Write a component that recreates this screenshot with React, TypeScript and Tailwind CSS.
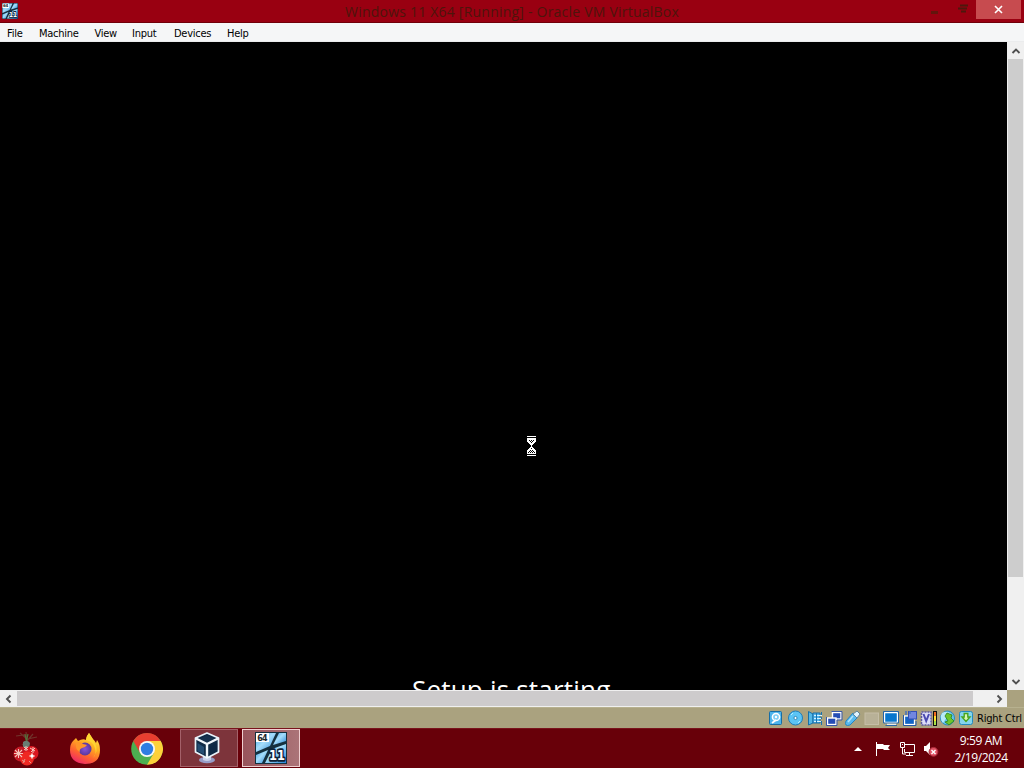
import React from "react";

const menuItems = [
  { label: "File", width: "w-[32px]" },
  { label: "Machine", width: "w-[55.5px]" },
  { label: "View", width: "w-[37.5px]" },
  { label: "Input", width: "w-[42px]" },
  { label: "Devices", width: "w-[53px]" },
  { label: "Help", width: "w-[40px]" },
];

function WindowsIcon({ size }: { size: number }) {
  return (
    <svg width={size} height={size} viewBox="0 0 32 32" className="shrink-0">
      <defs>
        <linearGradient id="pane" x1="0" y1="0" x2="1" y2="1">
          <stop offset="0" stopColor="#3f9fe3" />
          <stop offset="0.45" stopColor="#a5ddfb" />
          <stop offset="1" stopColor="#2584d6" />
        </linearGradient>
      </defs>
      <rect width="32" height="32" fill="#15303f" />
      <path d="M1 1H21L15 14 1 20Z" fill="url(#pane)" />
      <path d="M24 1H31V9L18 13Z" fill="url(#pane)" />
      <path d="M1 23 13 18 7 31H1Z" fill="url(#pane)" />
      <path d="M17 17 31 12V31H10Z" fill="url(#pane)" />
      <rect x="1" y="1" width="13" height="9" fill="#fff" />
      <text x="2.2" y="8.6" fontSize="8" fontWeight="700" fill="#20282d" textLength="10.5" fontFamily="DejaVu Sans">64</text>
      <text x="14" y="28" fontSize="14" fontWeight="700" fill="#fff" stroke="#0d2238" strokeWidth="3.4" strokeLinejoin="round" paintOrder="stroke" textLength="16" lengthAdjust="spacingAndGlyphs" fontFamily="DejaVu Sans">11</text>
    </svg>
  );
}

function Ornament() {
  return (
    <svg width="32" height="36" viewBox="0 0 32 36">
      <path d="M6 5 14 4 17 10 23 3M10 2 17 8 27 6M17 9 16 1M17 10 12 14" fill="none" stroke="#70332b" strokeWidth="1.2" />
      <path d="M15 3 17 13M18 3 16 12" stroke="#52733c" strokeWidth="1.2" />
      <path d="M13 11Q17 8 20 12L19 18H13Z" fill="#687d73" />
      <circle cx="11" cy="23" r="7.5" fill="#c41925" />
      <circle cx="21.5" cy="22" r="7" fill="#db1720" />
      <circle cx="17" cy="27.5" r="7" fill="#ef2822" />
      <path d="M5 19 12 26M5 26 12 19M8.5 18V27M4 22.5H13" stroke="#f6c6bb" strokeWidth="1.1" />
      <path d="M14 16 18 19M14 19 18 16M16 15V20M20 17 25 20M21 21 25 17M23 16V22M22 22V28M19 25H25" stroke="#f6c6bb" strokeWidth="1" />
      <path d="M12 29 15 31M15 28 13 32M19 30 21 32" stroke="#e59a8b" />
      <circle cx="22" cy="25" r="1.7" fill="#fff" />
    </svg>
  );
}

function Firefox() {
  return (
    <svg width="32" height="34" viewBox="0 0 32 34">
      <defs>
        <linearGradient id="fox" x1="0.8" y1="0" x2="0.3" y2="1">
          <stop offset="0" stopColor="#ffe84c" />
          <stop offset="0.4" stopColor="#ffad21" />
          <stop offset="0.7" stopColor="#ff632f" />
          <stop offset="1" stopColor="#ef276a" />
        </linearGradient>
        <radialGradient id="globe">
          <stop offset="0" stopColor="#8554dc" />
          <stop offset="1" stopColor="#5b379b" />
        </radialGradient>
      </defs>
      <path d="M4 9 7 6 9 9Q14 6 17 8Q17 4 20 1L24 7Q26 9 27 11L28 8Q31 12 31 18Q31 32 16 32Q1 31 1 18Q1 12 4 9Z" fill="url(#fox)" />
      <circle cx="16" cy="17" r="6.5" fill="url(#globe)" />
      <path d="M7 10Q12 9 14 12L18 13Q16 16 13 16Q10 17 11 20Q7 18 7 14Z" fill="#ff9529" />
      <path d="M17 8Q24 9 26 16Q28 22 24 26Q30 19 26 11L20 1Q17 5 17 8Z" fill="#ffd631" />
    </svg>
  );
}

function Chrome() {
  return (
    <svg width="32" height="32" viewBox="0 0 32 32">
      <circle cx="16" cy="16" r="15.8" fill="#4caf50" />
      <path d="M16 16 2.3 8A15.8 15.8 0 0 1 29.7 8Z" fill="#e83e30" />
      <path d="M16 8H29.7A15.8 15.8 0 0 1 16 31.8L22.9 20Z" fill="#fdd13a" />
      <path d="M2.3 8 9.1 20 16 8Z" fill="#e83e30" />
      <circle cx="16" cy="16" r="8" fill="#f8f8f6" />
      <circle cx="16" cy="16" r="6.2" fill="#2f7de1" />
    </svg>
  );
}

function VirtualBox() {
  return (
    <svg width="28" height="32" viewBox="0 0 28 32">
      <ellipse cx="14" cy="28" rx="8" ry="3.2" fill="#979dc8" />
      <path d="M10 22H18V28Q14 30 10 28Z" fill="#c9d0e8" />
      <path d="M14 1 25.5 6V20L14 26 2.5 20V6Z" fill="#102b46" stroke="#e9f3fa" strokeWidth="1.7" strokeLinejoin="round" />
      <path d="M6 7 14 3.5 22 7 14 10.5Z" fill="#17324e" />
      <path d="M3 6.5 14 12 25 6.5M14 12V26" fill="none" stroke="#f1f7fb" strokeWidth="2.4" />
      <path d="M4.5 11V19L11 22.5V15Z" fill="#244d72" />
      <path d="M23.5 11V19L17 22.5V15Z" fill="#0e2945" />
    </svg>
  );
}

function StatusIcons() {
  return (
    <svg width="209" height="18" viewBox="0 0 209 18" className="shrink-0">
      <rect x="1.5" y="2.5" width="12" height="13" rx="1" fill="#4db4ec" stroke="#176da5" />
      <circle cx="8" cy="8" r="3.6" fill="#7fcdf3" stroke="#fff" strokeWidth="1.5" />
      <circle cx="8" cy="8" r="1.2" fill="#fff" />
      <path d="m4 14 4-3" stroke="#fff" strokeWidth="1.6" />
      <circle cx="27.5" cy="9" r="7" fill="#5bc4f5" stroke="#217db8" />
      <circle cx="27.5" cy="9" r="1.6" fill="#fff" stroke="#3489b7" />
      <path d="m23 6 2-2m5 10 2-2" stroke="#b8edff" />
      <path d="M40.5 2.5 45 5V14L40.5 16Z" fill="#53b8e7" stroke="#176fa8" />
      <path d="M45 4H52V14H45Z" fill="#55b5ec" stroke="#176fa8" />
      <path d="M46 6.5H54M46 9.5H54M46 12.5H54" stroke="#d8f4ff" />
      <path d="M48.5 4V14M53.5 3V6M53.5 8V10M53.5 12V16" stroke="#1873b0" />
      <g fill="#254db5" stroke="#fff" strokeWidth="1.4">
        <rect x="64.5" y="3.5" width="8.5" height="6.5" />
        <rect x="59.5" y="9" width="8.5" height="6.5" />
      </g>
      <path d="M63.5 2.5H74V11H69M58.5 8V16.5H69V11" fill="none" stroke="#3858aa" />
      <path d="m78 12 7-8 5 4-8 8Q76 18 78 12Z" fill="#58baf0" stroke="#2285c3" />
      <path d="m85 5 4-3 3 3-3 4Z" fill="#e2f4ff" stroke="#61859d" />
      <path d="m80 13 5-6" stroke="#b5e5fa" strokeWidth="1.5" />
      <rect x="97" y="4" width="13.5" height="11.5" fill="#b8b197" stroke="#c5bea7" />
      <rect x="116.5" y="3.5" width="13" height="10" rx="1" fill="#0876cd" stroke="#fff" strokeWidth="1.4" />
      <path d="M115.5 2.5H130.5V14H115.5ZM117.5 16.5H129" fill="none" stroke="#2565a7" />
      <path d="M119 15.3H128" stroke="#fff" />
      <rect x="136.5" y="7" width="10" height="8.5" fill="#1264c5" stroke="#fff" strokeWidth="1.3" />
      <path d="M135.5 6V16.5H148V12" fill="none" stroke="#235aaa" />
      <rect x="140.5" y="2.5" width="8" height="7.5" fill="#7286e0" stroke="#354fb4" />
      <path d="M138 2V6M142 2V5" stroke="#4670bc" strokeWidth="1.5" />
      <rect x="153.5" y="3" width="9.5" height="13" fill="#dcdcf8" stroke="#5b59a2" strokeWidth="1.5" strokeDasharray="2 1" />
      <path d="m155.5 5 2.7 7L161 5" fill="none" stroke="#4a4ab1" strokeWidth="2" />
      <rect x="165.5" y="2.5" width="3" height="14" fill="#a8e346" stroke="#111" />
      <path d="M167 3V7" stroke="#ef6c20" strokeWidth="2" />
      <path d="M167 7V12" stroke="#ffe12f" strokeWidth="2" />
      <circle cx="179.5" cy="9" r="7" fill="#62c3e9" stroke="#2889bd" />
      <path d="M174 4Q179 1 183 5L179 8 175 14Q171 9 174 4Z" fill="#b7eaf9" />
      <path d="m179 4 5 2-1 3 3 3-5 4-4-3 3-1-3-5Z" fill="#6bc62c" stroke="#28801b" strokeWidth=".8" />
      <rect x="191.5" y="2.5" width="13" height="13" rx="2" fill="#84d5ed" stroke="#238ac1" />
      <path d="M196.2 4.5H199.8V8H202L198 12.5 194 8H196.2Z" fill="#d9f7b0" stroke="#48a51c" strokeWidth="1.4" />
    </svg>
  );
}

function Arrow({ direction }: { direction: "up" | "down" | "left" | "right" }) {
  const paths = {
    up: "m1.5 7 3.5-3.5L8.5 7",
    down: "m1.5 3 3.5 3.5L8.5 3",
    left: "M6.5 1.5 3 5l3.5 3.5",
    right: "M3.5 1.5 7 5 3.5 8.5",
  };

  return (
    <svg width="10" height="10" viewBox="0 0 10 10">
      <path d={paths[direction]} fill="none" stroke="#505050" strokeWidth="1.9" />
    </svg>
  );
}

function Hourglass() {
  return (
    <svg width="9" height="20" viewBox="0 0 9 20" shapeRendering="crispEdges">
      <path d="M0 0H9V1H0ZM0 2H9V6H8V7H7V8H6V9H5V11H6V12H7V13H8V14H9V18H0V14H1V13H2V12H3V11H4V9H3V8H2V7H1V6H0ZM0 19H9V20H0Z" fill="#fff" />
      <path d="M2 4H3V5H2ZM4 4H5V5H4ZM6 4H7V5H6ZM3 5H4V6H3ZM5 5H6V6H5ZM4 6H5V7H4ZM4 12H5V13H4ZM3 14H4V15H3ZM5 14H6V15H5ZM2 15H3V16H2ZM4 15H5V16H4ZM6 15H7V16H6ZM1 16H2V17H1ZM3 16H4V17H3ZM5 16H6V17H5ZM7 16H8V17H7Z" fill="#000" />
    </svg>
  );
}

function Taskbar() {
  return (
    <footer className="flex h-10 shrink-0 bg-[#680009] border-t border-[#79131c] text-white">
      <div className="flex w-[52px] items-center justify-center"><Ornament /></div>
      <div className="ml-0.5 flex w-[62px] items-center justify-center"><Firefox /></div>
      <div className="flex w-[62px] items-center justify-center"><Chrome /></div>
      <div className="ml-0.5 flex h-[38px] w-[58px] items-center justify-center border border-[#a46169] bg-[#7d343b] pr-1"><VirtualBox /></div>
      <div className="ml-1 flex h-[38px] w-[58px] items-center justify-center border border-[#f0cfd0] bg-gradient-to-r from-[#98545b] to-[#ab7478]"><WindowsIcon size={32} /></div>
      <div className="ml-auto flex items-center">
        <svg width="90" height="20" viewBox="0 0 90 20" className="mr-[11px]">
          <path d="m5 12 4-4 4 4Z" fill="#fff" />
          <path d="M27.5 3V17" stroke="#fff" />
          <path d="M28 5H34L35 6H41L39 9 41 11H35L34 10H28Z" fill="#fff" />
          <path d="M56 5.5H65.5V13.5H55.5V10M60.5 14V16M57 16.5H64M53.5 9V15H57M51.5 3.5H55.5V8.5H51.5Z" fill="none" stroke="#fff" />
          <path d="M53 5.5H54" stroke="#fff" />
          <path d="M75 7H77L81 3V16L77 12H75Z" fill="#fff" />
          <circle cx="84.5" cy="12.8" r="4.4" fill="#df5364" stroke="#ab2838" />
          <path d="m82.5 11 4 4m0-4-4 4" stroke="#fff" strokeWidth="1.4" />
        </svg>
        <div className="mr-3 w-[62px] font-['Open_Sans',sans-serif] text-center text-[12px] leading-[17px] tracking-[-0.4px]">
          <div>9:59 AM</div>
          <div>2/19/2024</div>
        </div>
      </div>
    </footer>
  );
}

export default function App() {
  return (
    <div className="flex h-screen w-full flex-col overflow-hidden bg-black">
      <header className="flex h-[23px] shrink-0 items-start border-b border-[#700009] bg-[#990011]">
        <div className="w-[345px] pl-[2px] pt-[3px]"><WindowsIcon size={16} /></div>
        <h1 className="flex-1 whitespace-nowrap font-['Open_Sans',sans-serif] text-[14px] leading-[23px] tracking-[0.22px] text-[#4d150b]">
          Windows 11 X64 [Running] - Oracle VM VirtualBox
        </h1>
        <div className="flex w-[131px] shrink-0">
          <div className="flex h-[19px] flex-1 items-start justify-end gap-[19px] pr-[7px] pt-1">
            <span className="mt-[7px] h-[3px] w-[7px] bg-[#63150d]" />
            <svg width="12" height="10"><path d="M3 1.5H11M1 4.5H10M4 7.5H9" stroke="#4d180d" strokeWidth="2" /></svg>
          </div>
          <div className="mr-[3px] flex h-[19px] w-[45px] items-center justify-center bg-[#c74b4f]">
            <svg width="9" height="9"><path d="m1 1 7 7m0-7L1 8" stroke="#fff" strokeWidth="1.6" /></svg>
          </div>
        </div>
      </header>
      <nav className="flex h-[19px] shrink-0 items-center border-b border-[#ebeced] bg-[#f5f6f7] pl-[7px] pt-[2px] font-['DejaVu_Sans_Condensed','Noto_Sans',sans-serif] text-[11px] leading-none tracking-[-0.25px] text-black">
        {menuItems.map((item) => (
          <span key={item.label} className={item.width}>{item.label}</span>
        ))}
      </nav>
      <main className="flex h-[648px] shrink-0">
        <section className="relative w-[1007px] shrink-0 overflow-hidden bg-black">
          <div className="absolute left-[527px] top-[394px]"><Hourglass /></div>
          <p className="absolute left-[412px] top-[629px] whitespace-nowrap font-['Open_Sans',sans-serif] text-[26px] leading-[36px] tracking-[0.2px] text-white">Setup is starting</p>
        </section>
        <aside className="flex w-[17px] flex-col bg-[#f0f0f0]">
          <div className="flex h-[17px] items-center justify-center"><Arrow direction="up" /></div>
          <div className="ml-px mr-px h-[518px] bg-[#cdcdcd]" />
          <div className="mt-auto flex h-[17px] items-center justify-center"><Arrow direction="down" /></div>
        </aside>
      </main>
      <div className="flex h-[17px] shrink-0 bg-[#aaa27f]">
        <div className="flex w-[1007px] border-y border-[#f0f0f0] bg-[#f0f0f0]">
          <div className="flex w-[17px] items-center justify-center"><Arrow direction="left" /></div>
          <div className="w-[956px] bg-[#cdcbcc]" />
          <div className="ml-auto flex w-[17px] items-center justify-center"><Arrow direction="right" /></div>
        </div>
      </div>
      <div className="flex h-[21px] shrink-0 items-center justify-end border-t border-[#b7b18f] bg-[#aaa27f] pr-px text-black">
        <StatusIcons />
        <span className="w-[46px] whitespace-nowrap pt-0.5 font-['DejaVu_Sans_Condensed','Noto_Sans',sans-serif] text-[11px] tracking-[-0.2px]">Right Ctrl</span>
      </div>
      <Taskbar />
    </div>
  );
}
